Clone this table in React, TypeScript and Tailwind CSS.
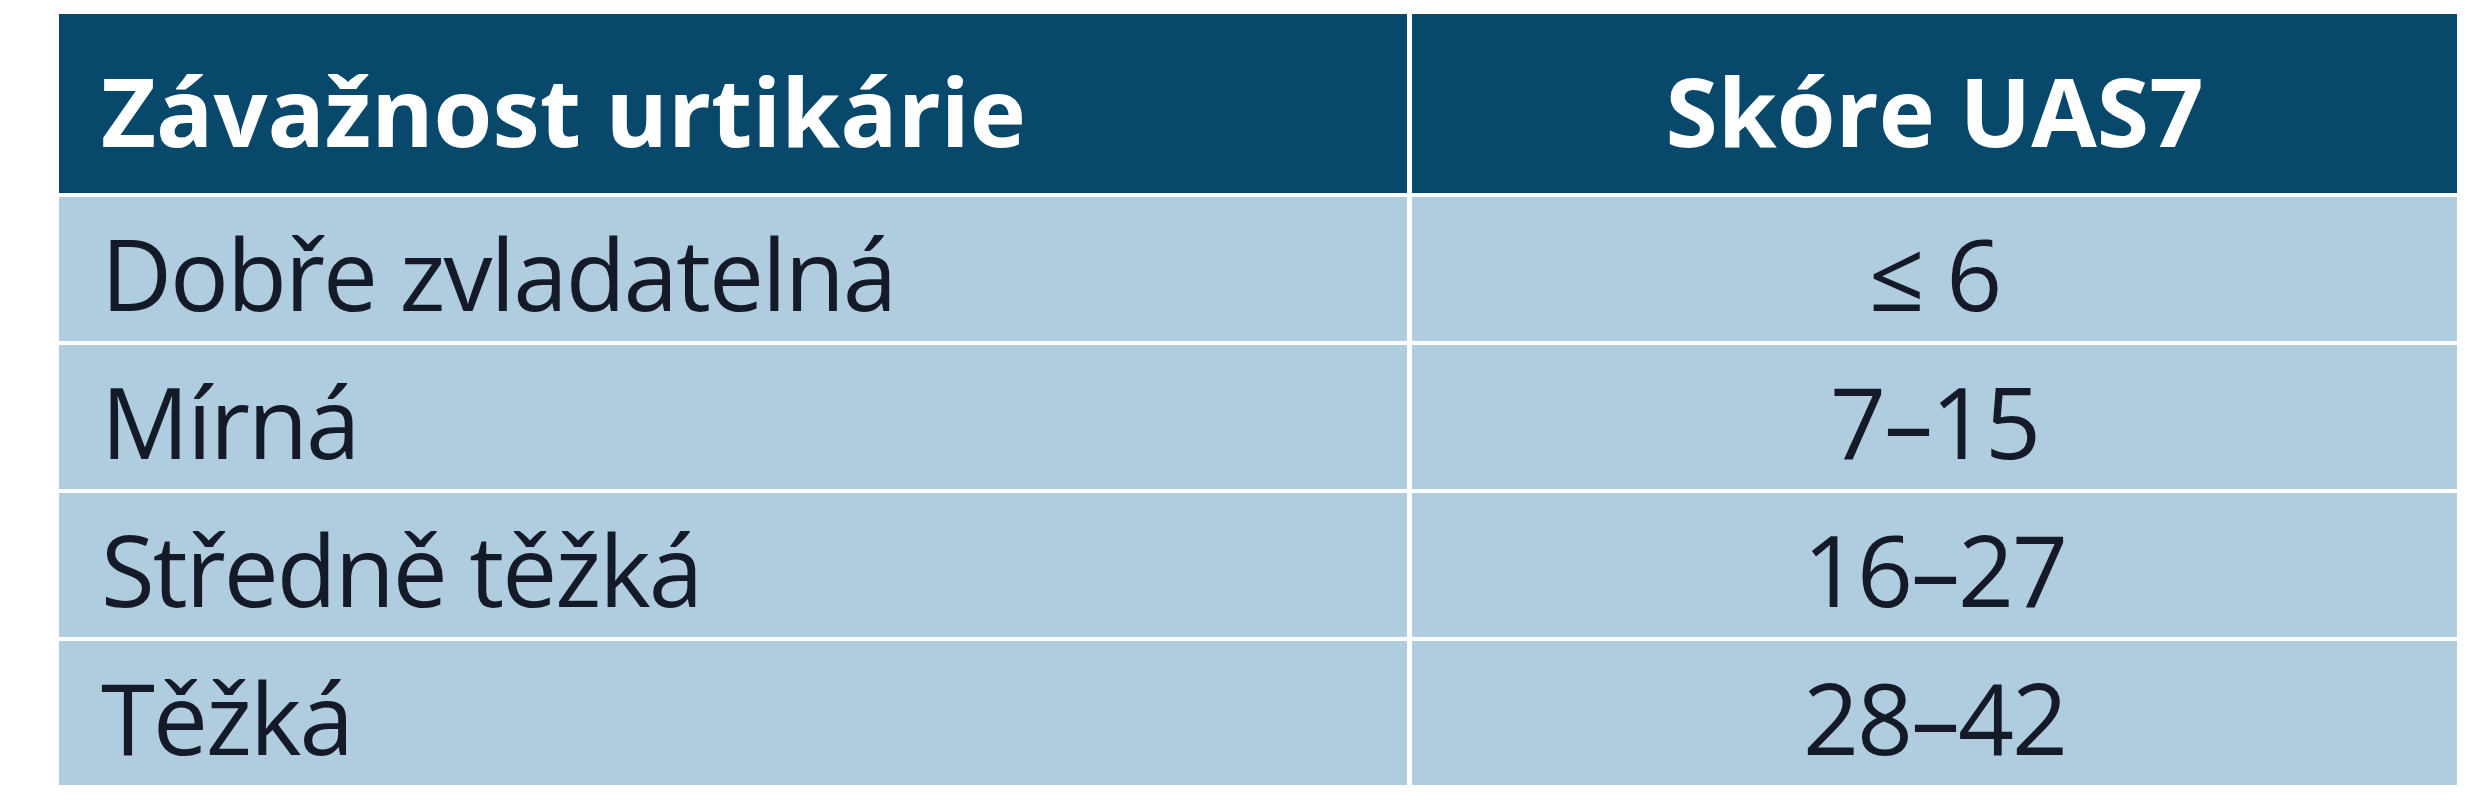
import React from "react";

const rows: [string, string][] = [
  ["Dobře zvladatelná", "≤ 6"],
  ["Mírná", "7–15"],
  ["Středně těžká", "16–27"],
  ["Těžká", "28–42"],
];

export default function App() {
  return (
    <div
      className="w-[2492px] h-[800px] bg-white pt-[14px] pl-[59px]"
      style={{ fontFamily: "'Open Sans', Lato, sans-serif" }}
    >
      <div className="grid grid-cols-[1348px_1045px] gap-x-[5px] gap-y-[4px]">
        <div className="h-[179px] bg-[#08496b] flex items-center pl-[42px] pt-[14px]">
          <span className="text-white font-bold text-[95px] leading-none">Závažnost urtikárie</span>
        </div>
        <div className="h-[179px] bg-[#08496b] flex items-center justify-center pt-[14px]">
          <span className="text-white font-bold text-[95px] leading-none">Skóre UAS7</span>
        </div>
        {rows.map(([a, b]) => (
          <React.Fragment key={a}>
            <div className="h-[144px] bg-[#b0cde0] flex items-center pl-[42px] pt-[8px]">
              <span className="text-[#141a28] text-[98px] leading-none tracking-[-2px]">{a}</span>
            </div>
            <div className="h-[144px] bg-[#b0cde0] flex items-center justify-center pt-[8px]">
              <span className="text-[#141a28] text-[98px] leading-none tracking-[-2px]">{b}</span>
            </div>
          </React.Fragment>
        ))}
      </div>
    </div>
  );
}
